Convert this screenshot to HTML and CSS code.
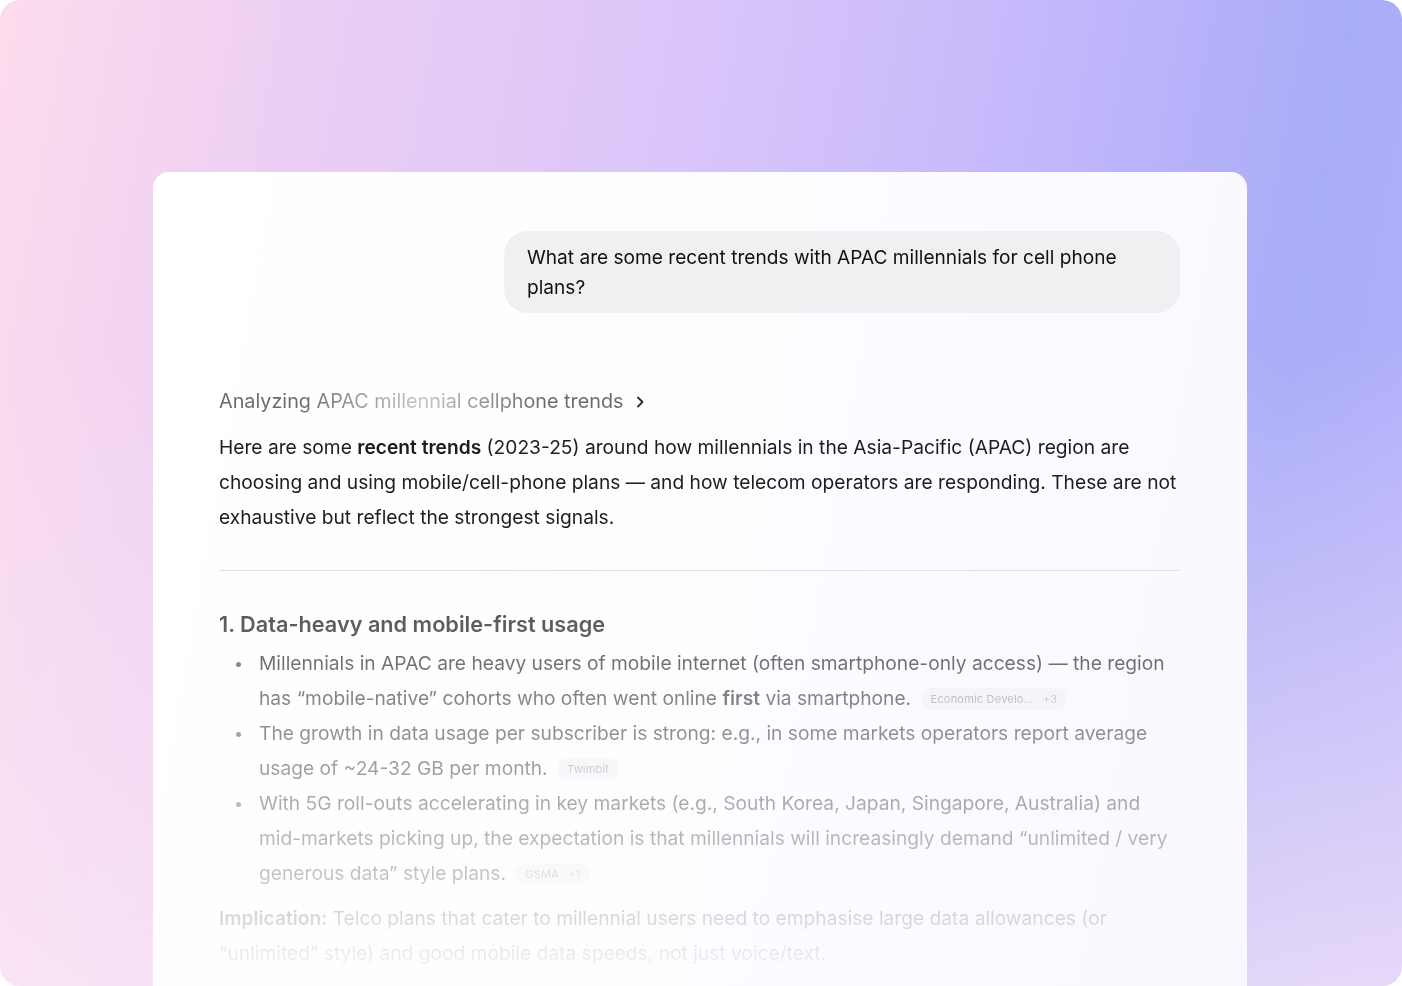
FILE: index.html
```html
<!DOCTYPE html>
<html lang="en">
<head>
    <meta charset="UTF-8">
    <meta name="viewport" content="width=device-width, initial-scale=1.0">
    <title>APAC millennial cellphone trends</title>
    <link rel="stylesheet" href="styles.css">
</head>
<body>

    <div class="screen">
        <div class="card">
            <div class="thread">

                <!-- User question -->
                <div class="user-row">
                    <div class="bubble">What are some recent trends with APAC millennials for cell phone plans?</div>
                </div>

                <!-- Reasoning summary -->
                <div class="thinking">
                    <span class="shimmer">Analyzing APAC millennial cellphone trends</span>
                    <svg class="chevron" width="14" height="14" viewBox="0 0 14 14">
                        <path d="M5 2.5 L9.5 7 L5 11.5" fill="none" stroke="#2b2b2b" stroke-width="1.8" stroke-linecap="round" stroke-linejoin="round"/>
                    </svg>
                </div>

                <!-- Answer -->
                <div class="answer">
                    <p>Here are some <strong>recent trends</strong> (2023-25) around how millennials in the Asia-Pacific (APAC) region are choosing and using mobile/cell-phone plans — and how telecom operators are responding. These are not exhaustive but reflect the strongest signals.</p>

                    <hr>

                    <h3>1. Data-heavy and mobile-first usage</h3>
                    <ul>
                        <li>Millennials in APAC are heavy users of mobile internet (often smartphone-only access) — the region has “mobile-native” cohorts who often went online <strong>first</strong> via smartphone. <span class="source">Economic Develo... <span class="more">+3</span></span></li>
                        <li>The growth in data usage per subscriber is strong: e.g., in some markets operators report average usage of ~24-32 GB per month. <span class="source">Twimbit</span></li>
                        <li>With 5G roll-outs accelerating in key markets (e.g., South Korea, Japan, Singapore, Australia) and mid-markets picking up, the expectation is that millennials will increasingly demand “unlimited / very generous data” style plans. <span class="source">GSMA <span class="more">+1</span></span></li>
                    </ul>
                    <p><strong>Implication:</strong> Telco plans that cater to millennial users need to emphasise large data allowances (or “unlimited” style) and good mobile data speeds, not just voice/text.</p>
                </div>

            </div>
        </div>
    </div>

</body>
</html>
```

FILE: styles.css
```css
body {
    margin: 0;
    padding: 0;
    background-color: #ffffff;
    font-family: Inter, "Noto Sans", sans-serif;
    color: #1d1d1f;
}

.screen {
    height: 986px;
    overflow: hidden;
    border-radius: 20px;
    background:
        linear-gradient(to bottom, rgba(255, 236, 246, 0) 35%, rgba(255, 236, 246, 0.65) 100%),
        linear-gradient(100deg, #fcdcec 0%, #eccef4 20%, #d9c5fa 45%, #c5b8fb 66%, #a9acf8 86%, #b7b2fd 100%);
}

.card {
    width: 1094px;
    margin: 172px 0 0 153px;
    height: 900px;
    border-radius: 16px;
    background: linear-gradient(100deg, #ffffff 0%, #fdfcff 50%, #f9f8ff 100%);
}

.thread {
    padding: 59px 67px 0 66px;
    -webkit-mask-image: linear-gradient(to bottom, #000 0px, #000 368px, rgba(0,0,0,0.72) 451px, rgba(0,0,0,0.54) 528px, rgba(0,0,0,0.37) 628px, rgba(0,0,0,0.25) 708px, rgba(0,0,0,0.09) 778px, rgba(0,0,0,0.03) 814px);
    mask-image: linear-gradient(to bottom, #000 0px, #000 368px, rgba(0,0,0,0.72) 451px, rgba(0,0,0,0.54) 528px, rgba(0,0,0,0.37) 628px, rgba(0,0,0,0.25) 708px, rgba(0,0,0,0.09) 778px, rgba(0,0,0,0.03) 814px);
}

.user-row {
    display: flex;
    justify-content: flex-end;
}

.bubble {
    width: 630px;
    padding: 11px 23px;
    border-radius: 24px;
    background-color: #f0eff2;
    font-size: 19.1px;
    line-height: 30px;
    color: #111;
}

.thinking {
    display: flex;
    align-items: center;
    gap: 10px;
    margin-top: 71px;
    font-size: 19.8px;
    line-height: 35px;
}

.shimmer {
    background: linear-gradient(90deg, #6a6a6a 0%, #6a6a6a 20%, #8f8f8f 30%, #c6c6c6 50%, #8f8f8f 68%, #6a6a6a 80%);
    -webkit-background-clip: text;
    background-clip: text;
    color: transparent;
}

.chevron {
    display: block;
}

.answer {
    font-size: 19.2px;
    line-height: 35px;
    margin-top: 11px;
}

.answer p {
    margin: 0;
}

.answer strong {
    font-weight: 600;
}

.answer hr {
    border: none;
    border-top: 1px solid #dedede;
    margin: 35px 0 38px;
}

.answer h3 {
    margin: 0 0 7px;
    font-size: 21.7px;
    line-height: 30px;
    font-weight: 600;
}

.answer ul {
    margin: 0 0 10px;
    padding-left: 40px;
    list-style: none;
}

.answer li {
    position: relative;
}

/* bullet sits a little further out than the default marker */
.answer li::before {
    content: "";
    position: absolute;
    left: -23px;
    top: 16px;
    width: 5px;
    height: 5px;
    border-radius: 50%;
    background-color: #444;
}

.source {
    display: inline-block;
    margin-left: 4px;
    padding: 0 10px;
    height: 22px;
    line-height: 22px;
    border-radius: 11px;
    background-color: #f1f1f4;
    color: #8d8d92;
    font-size: 11px;
    letter-spacing: 0.2px;
    vertical-align: 2px;
}

.source .more {
    margin-left: 6px;
    color: #a5a5aa;
}
```
